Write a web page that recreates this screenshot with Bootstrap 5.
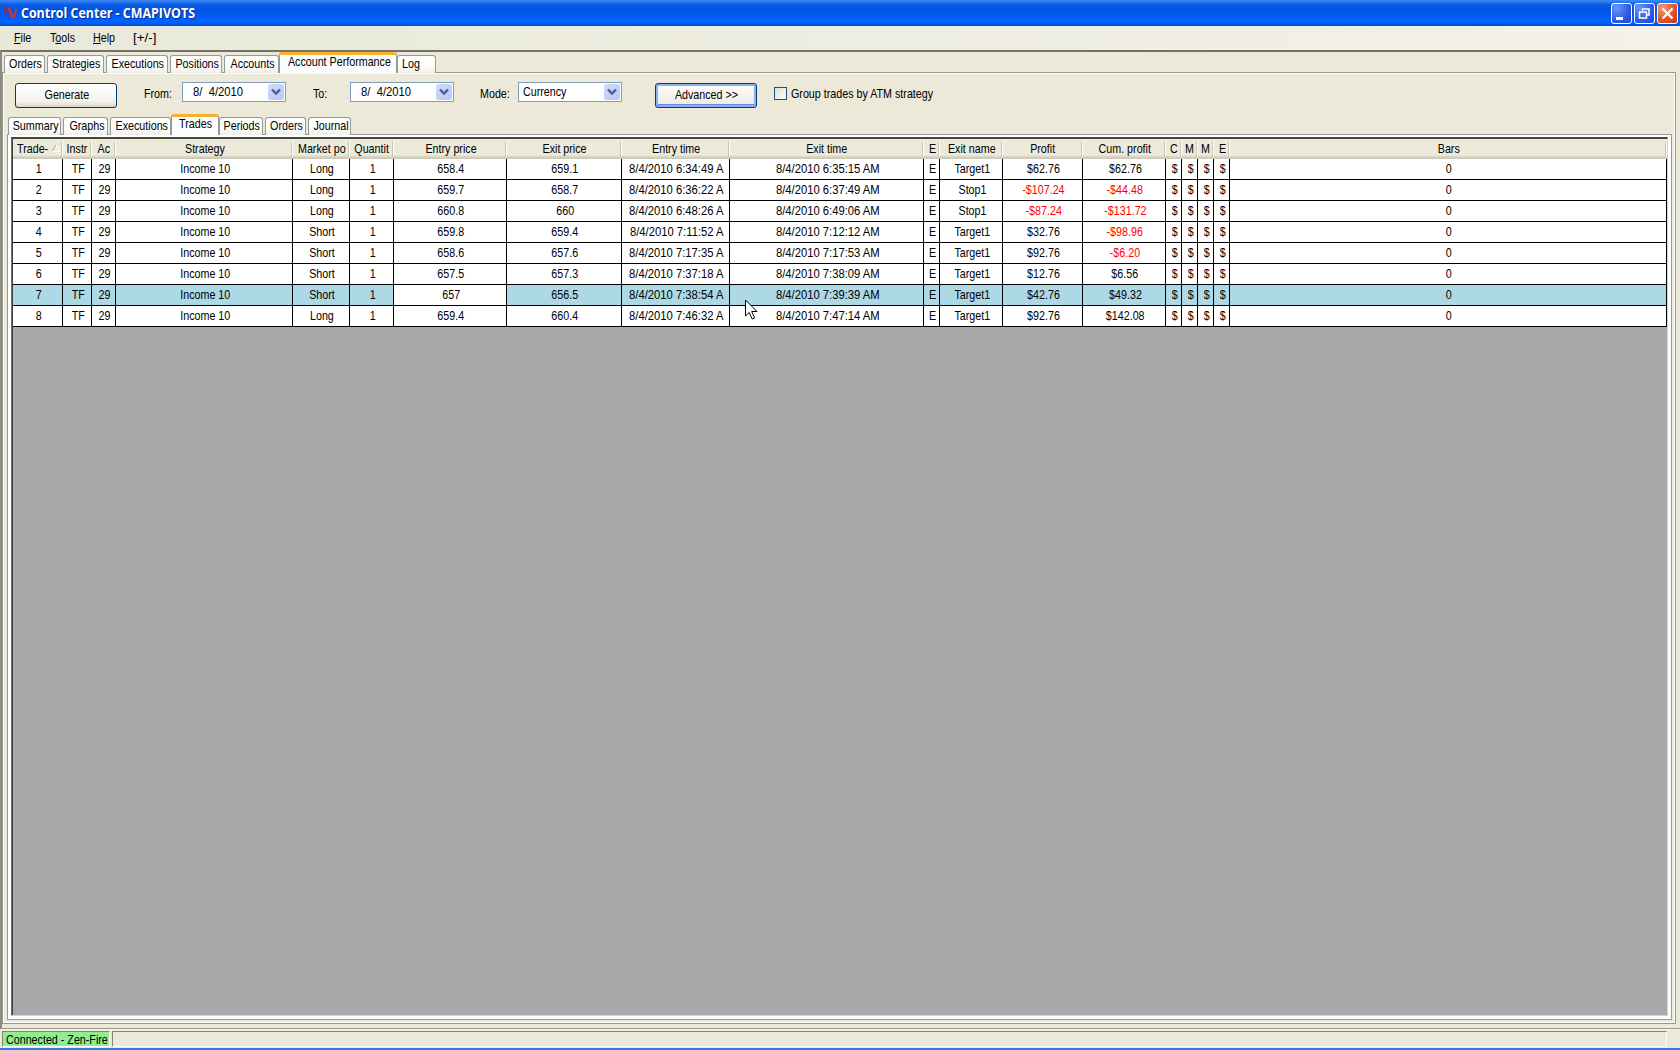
<!DOCTYPE html>
<html lang="en">
<head>
<meta charset="utf-8">
<title>Control Center - CMAPIVOTS</title>
<link rel="stylesheet" href="https://cdn.jsdelivr.net/npm/bootstrap@5.3.0/dist/css/bootstrap.min.css">
<style>
:root{--face:#ece9d8;--edge:#919b9c}
body{width:1680px;height:1050px;overflow:hidden;background:var(--face);color:#000;font:13.4px/16px "Liberation Sans",sans-serif}
/* condensed text, as the bitmap system font draws it */
.sq{display:inline-block;transform:scaleX(.8);white-space:nowrap;margin:0 -10px}
.sq.from-start{transform-origin:0 50%;margin:0}
.sq.stamp{transform:scaleX(.84)}
.titlebar{height:26px;background:linear-gradient(#3c8cf8 0,#2a78ee 2px,#0a5ae6 5px,#0054e3 10px,#0058ee 14px,#0262fc 19px,#0162fb 23px,#0046d6 26px);padding:0 2px 0 3px}
.caption-text{font:bold 13.3px/16px "Open Sans",sans-serif;color:#fff;text-shadow:1px 1px 1px #062a8c;margin-left:4px;transform:scaleX(.935);transform-origin:0 50%}
.winbtn{width:21px;height:21px;border:1px solid #fff;border-radius:3px;background:radial-gradient(circle at 25% 20%,#6e96f8,#2c5ae8 60%,#1c46cc)}
.winbtn svg,.logo{display:block}
.winbtn.quit{background:radial-gradient(circle at 25% 20%,#f09878,#e05028 60%,#c03810)}
.menubar{height:24px;background:linear-gradient(90deg,#e8e9da,#f4f1e8);padding-left:14px;padding-top:4px}
.menubar a{color:#000;text-decoration:none}
.client{height:978px;border-left:2px solid #8f8c7c;border-top:2px solid #747264;padding:0 4px 0 0}
.tabstrip{padding-left:2px;gap:2px;margin-bottom:-1px;position:relative}
.tabstrip.inner{padding-left:1px}
.tabstrip .tabitem{height:18px;border:1px solid var(--edge);border-bottom:0;border-radius:3px 3px 0 0;background:linear-gradient(#fff,#fcfcfa 60%,#f0f0ea);text-align:center;line-height:15px;padding-left:2px;white-space:nowrap}
.tabstrip .tabitem.active{height:21px;border-top:3px solid #f8b030;background:#fcfcfe;line-height:14px;margin:0 -2px;z-index:1;position:relative}
.page-outer{border:1px solid var(--edge);box-shadow:inset 0 0 0 1px #fdfdfb;height:952px;padding:0 3px 3px 4px}
.toolrow{height:41px;padding-left:8px}
.xpbtn{height:25px;width:102px;border:1px solid #003c74;border-radius:3px;background:linear-gradient(#fff,#f3f2ec 75%,#dcd6ca);text-align:center;line-height:21px;padding:0 0 2px 1px;margin-top:10px;color:#000}
.xpbtn.focused{box-shadow:inset 0 0 0 2px #8fb0ee,inset 0 -2px 0 1px #6984e4;background:linear-gradient(#fdfdfb,#ece9e2)}
.field{width:104px;height:20px;border:1px solid #7f9db9;background:#fff;margin-top:9px;padding:0 1px 0 10px}
.dropbtn{width:16px;height:16px;background:linear-gradient(135deg,#d0dcfc,#b4c8f6);border-radius:2px}
.lbl{margin-top:11px;height:20px;line-height:20px}
.tick{width:13px;height:13px;border:1px solid #1c5180;background:linear-gradient(135deg,#dcdcd7,#fff);margin-top:14px}
.page-inner{border:1px solid var(--edge);background:#fff;height:886px;padding:2px 3px 3px 3px}
.gridbox{border:1px solid #716f64;border-top:2px solid #4a463c;border-right-color:#d8d4c4;border-bottom-color:#d8d4c4;height:879px;background:#a9a9a9;padding-left:1px;overflow:hidden;box-shadow:inset 1px 0 0 #404040}
.trades{table-layout:fixed;width:1654px;border-collapse:separate;border-spacing:0;text-align:center;line-height:16px}
.trades th{height:20px;font-weight:400;background:linear-gradient(#ebeadb 0 16px,#e2decd 17px,#d6d2c2 18px,#cbc7b8);padding:0;white-space:nowrap;overflow:hidden;position:relative}
.trades th::after{content:"";position:absolute;right:0;top:3px;height:14px;width:2px;background:linear-gradient(90deg,#c7c5b2 50%,#fff 50%)}
.trades td{height:21px;padding:0 0 0 2px;border-right:1px solid #000;border-bottom:1px solid #000;background:#fff;white-space:nowrap;overflow:hidden}
.trades tr.picked td:not(.current){background:#add8e6}
.trades .loss{color:#f00}
.sortmark{position:absolute;left:39px;top:6px}
.pointer{position:absolute;left:745px;top:299px}
.statusbar{height:20px;padding:2px 13px 0 2px;border-top:1px solid #9a978a;box-shadow:inset 0 1px 0 #f8f7ee}
.connected{width:108px;height:16px;background:#90ee90;border:1px solid #85836f;border-right-color:#fff;border-bottom-color:#fff;padding-left:3px;line-height:16px;white-space:nowrap}
.statusfill{height:16px;border:1px solid #85836f;border-right-color:#fff;border-bottom-color:#fff;margin-left:2px}
.taskedge{height:2px;background:#3a7bdc}
</style>
<script src="https://cdn.jsdelivr.net/npm/bootstrap@5.3.0/dist/js/bootstrap.bundle.min.js"></script>
</head>
<body>
<header class="titlebar d-flex align-items-center">
  <svg class="logo" width="14" height="12" viewBox="0 0 14 12" fill="none"><path d="M0 6C1 1 4 0 6 5S9 11 10 9" stroke="#8c3050" stroke-width="2.400"/><path d="M5 1C8 1 8 10 10 10S12.500 6 13 2" stroke="#d8352d" stroke-width="2"/></svg>
  <span class="caption-text">Control Center - CMAPIVOTS</span>
  <div class="d-flex ms-auto" style="gap:2px">
    <span class="winbtn"><svg width="19" height="19"><path d="M4 14.500h7" stroke="#fff" stroke-width="3"/></svg></span>
    <span class="winbtn"><svg width="19" height="19" fill="none" stroke="#fff"><path d="M4.500 8v6h7V8M4 8h8" stroke-width="1.500"/><path d="M7.500 6.500V5h6.500v6h-2" stroke-width="1.500"/></svg></span>
    <span class="winbtn quit"><svg width="19" height="19"><path d="M4.500 4.500l10 10M14.500 4.500l-10 10" stroke="#fff" stroke-width="2.200"/></svg></span>
  </div>
</header>
<nav class="menubar d-flex"><a href="#" style="width:36px"><span class="sq from-start"><u>F</u>ile</span></a><a href="#" style="width:43px"><span class="sq from-start">T<u>o</u>ols</span></a><a href="#" style="width:40px"><span class="sq from-start"><u>H</u>elp</span></a><a href="#">[+/-]</a></nav>
<main class="client">
  <div class="tabstrip d-flex align-items-end">
    <div class="tabitem" style="width:41px"><span class="sq">Orders</span></div><div class="tabitem" style="width:57px"><span class="sq">Strategies</span></div><div class="tabitem" style="width:62px"><span class="sq">Executions</span></div><div class="tabitem" style="width:52px"><span class="sq">Positions</span></div><div class="tabitem" style="width:55px"><span class="sq">Accounts</span></div><div class="tabitem active" style="width:118px"><span class="sq">Account Performance</span></div><div class="tabitem text-start ps-1" style="width:39px"><span class="sq from-start">Log</span></div>
  </div>
  <section class="page-outer">
    <div class="toolrow d-flex">
      <button class="xpbtn"><span class="sq">Generate</span></button>
      <span class="lbl" style="margin-left:27px;width:38px"><span class="sq from-start">From:</span></span>
      <div class="field d-flex align-items-center justify-content-between"><span class="sq from-start stamp">8/&nbsp; 4/2010</span><span class="dropbtn"><svg class="d-block" width="16" height="16"><path d="M4 5.500l4 4 4-4" fill="none" stroke="#4d6185" stroke-width="2.400"/></svg></span></div>
      <span class="lbl" style="margin-left:27px;width:37px"><span class="sq from-start">To:</span></span>
      <div class="field d-flex align-items-center justify-content-between"><span class="sq from-start stamp">8/&nbsp; 4/2010</span><span class="dropbtn"><svg class="d-block" width="16" height="16"><path d="M4 5.500l4 4 4-4" fill="none" stroke="#4d6185" stroke-width="2.400"/></svg></span></div>
      <span class="lbl" style="margin-left:26px;width:38px"><span class="sq from-start">Mode:</span></span>
      <div class="field d-flex align-items-center justify-content-between ps-1"><span class="sq from-start">Currency</span><span class="dropbtn"><svg class="d-block" width="16" height="16"><path d="M4 5.500l4 4 4-4" fill="none" stroke="#4d6185" stroke-width="2.400"/></svg></span></div>
      <button class="xpbtn focused" style="margin-left:33px"><span class="sq">Advanced &gt;&gt;</span></button>
      <span class="tick" style="margin-left:17px"></span><span class="lbl ms-1"><span class="sq from-start">Group trades by ATM strategy</span></span>
    </div>
    <div class="tabstrip inner d-flex align-items-end">
      <div class="tabitem" style="width:53px"><span class="sq">Summary</span></div><div class="tabitem" style="width:45px"><span class="sq">Graphs</span></div><div class="tabitem" style="width:61px"><span class="sq">Executions</span></div><div class="tabitem active" style="width:48px"><span class="sq">Trades</span></div><div class="tabitem" style="width:44px"><span class="sq">Periods</span></div><div class="tabitem" style="width:41px"><span class="sq">Orders</span></div><div class="tabitem" style="width:43px"><span class="sq">Journal</span></div>
    </div>
    <div class="page-inner"><div class="gridbox">
      <table class="trades">
        <colgroup><col style="width:50px"><col style="width:29px"><col style="width:24px"><col style="width:177px"><col style="width:57px"><col style="width:44px"><col style="width:113px"><col style="width:115px"><col style="width:108px"><col style="width:194px"><col style="width:16px"><col style="width:63px"><col style="width:80px"><col style="width:83px"><col style="width:16px"><col style="width:16px"><col style="width:16px"><col style="width:16px"><col style="width:437px"></colgroup>
        <thead><tr><th class="text-start ps-1"><span class="sq from-start">Trade-</span><svg class="sortmark" width="9" height="7" viewBox="0 0 9 7"><path d="M0 6.500L4 0" stroke="#aca899"/><path d="M4 0l4 6.500H0" stroke="#fff" fill="none"/></svg></th></tr></thead>
        <tbody></tbody>
      </table>
    </div></div>
  </section>
</main>
<footer><div class="statusbar d-flex"><div class="connected"><span class="sq from-start">Connected - Zen-Fire</span></div><div class="statusfill flex-grow-1"></div></div><div class="taskedge"></div></footer>
<svg class="pointer" width="14" height="22" viewBox="0 0 14 22"><path d="M.5 1v16l3.700-3.500 3 6.500 2.500-1-3-6.500H12z" fill="#fff" stroke="#000"/></svg>
<script>
const heads = ['Instr','Ac','Strategy','Market po','Quantit','Entry price','Exit price','Entry time','Exit time','E','Exit name','Profit','Cum. profit','C','M','M','E','Bars'];
// position, entry price, exit price, entry time, exit time, exit name, profit, cumulative profit
const trades = [
  ['Long','658.4','659.1','6:34:49','6:35:15','Target1','$62.76','$62.76'],
  ['Long','659.7','658.7','6:36:22','6:37:49','Stop1','-$107.24','-$44.48'],
  ['Long','660.8','660','6:48:26','6:49:06','Stop1','-$87.24','-$131.72'],
  ['Short','659.8','659.4','7:11:52','7:12:12','Target1','$32.76','-$98.96'],
  ['Short','658.6','657.6','7:17:35','7:17:53','Target1','$92.76','-$6.20'],
  ['Short','657.5','657.3','7:37:18','7:38:09','Target1','$12.76','$6.56'],
  ['Short','657','656.5','7:38:54','7:39:39','Target1','$42.76','$49.32'],
  ['Long','659.4','660.4','7:46:32','7:47:14','Target1','$92.76','$142.08']
];
const picked = 6;
document.querySelector('.trades thead tr').insertAdjacentHTML('beforeend', heads.map(h => `<th><span class="sq">${h}</span></th>`).join(''));
document.querySelector('.trades tbody').innerHTML = trades.map((t, i) => {
  const cells = [i + 1, 'TF', '29', 'Income 10', t[0], '1', t[1], t[2], `8/4/2010 ${t[3]} A`, `8/4/2010 ${t[4]} AM`, 'E', t[5], t[6], t[7], '$', '$', '$', '$', '0'];
  return `<tr class="${i === picked ? 'picked' : ''}">` + cells.map((c, k) => {
    const cls = String(c)[0] === '-' ? 'loss' : (i === picked && k === 6 ? 'current' : '');
    return `<td class="${cls}"><span class="sq${k === 8 || k === 9 ? ' stamp' : ''}">${c}</span></td>`;
  }).join('') + '</tr>';
}).join('');
</script>
</body>
</html>
